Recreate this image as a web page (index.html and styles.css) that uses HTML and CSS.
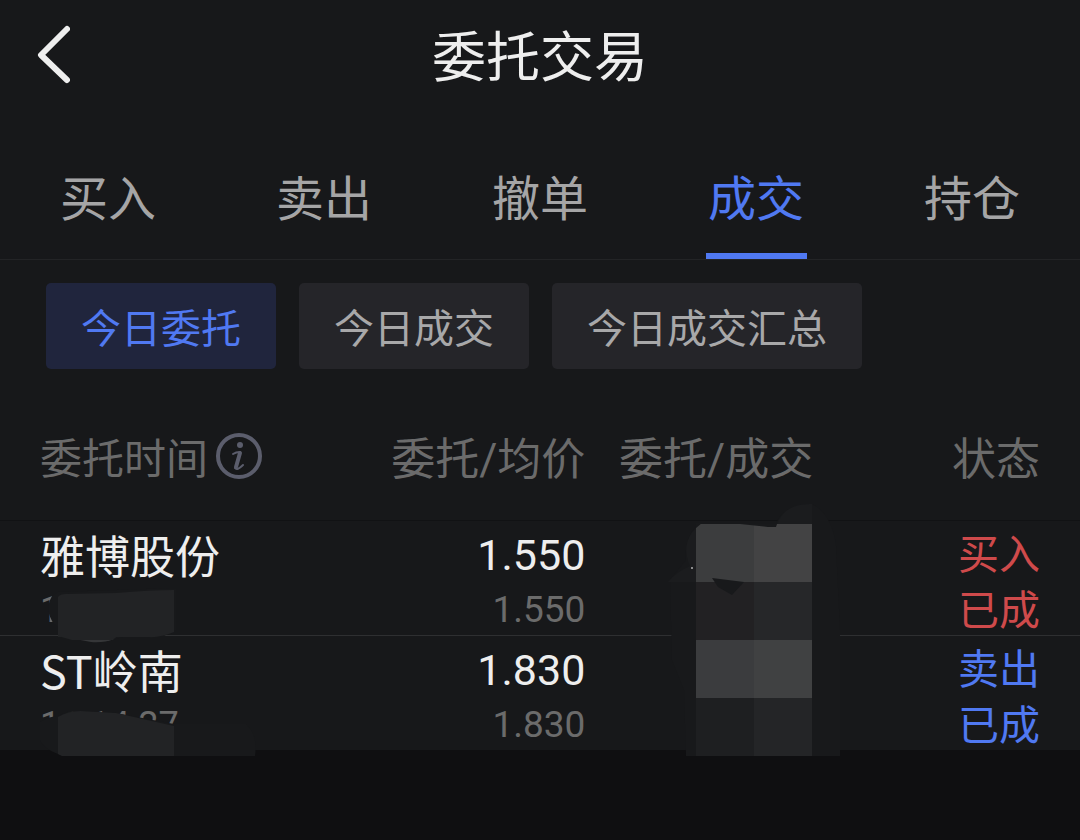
FILE: index.html
```html
<!DOCTYPE html>
<html lang="zh-CN">
<head>
    <meta charset="UTF-8">
    <meta name="viewport" content="width=device-width, initial-scale=1.0">
    <title>委托交易</title>
    <link rel="stylesheet" href="styles.css">
</head>
<body>
    <div class="page">
        <header class="header">
            <button class="back" type="button" aria-label="返回">
                <svg width="36" height="60" viewBox="0 0 36 60">
                    <path d="M33 4 L7 30 L33 55" />
                </svg>
            </button>
            <h1>委托交易</h1>
        </header>

        <nav class="tabs">
            <a href="#buy">买入</a>
            <a href="#sell">卖出</a>
            <a href="#cancel">撤单</a>
            <a href="#deal" class="active">成交</a>
            <a href="#position">持仓</a>
        </nav>

        <div class="filters">
            <button type="button" class="chip active">今日委托</button>
            <button type="button" class="chip">今日成交</button>
            <button type="button" class="chip">今日成交汇总</button>
        </div>

        <div class="orders">
            <table>
                <thead>
                    <tr>
                        <th class="col-time">
                            <div class="time-head">
                                <span>委托时间</span>
                                <button class="info" type="button" aria-label="说明">
                                    <svg width="48" height="48" viewBox="0 0 48 48">
                                        <circle class="ring" cx="24" cy="24" r="21" />
                                        <circle class="dot" cx="25" cy="13" r="3" />
                                        <path class="stem" d="M18 22 Q21 20 25 20" />
                                        <path class="stem bold" d="M25 21 L21 35" />
                                        <path class="stem" d="M20 36 Q22 39 28 33" />
                                    </svg>
                                </button>
                            </div>
                        </th>
                        <th class="col-price">委托/均价</th>
                        <th class="col-amount">委托/成交</th>
                        <th class="col-state">状态</th>
                    </tr>
                </thead>
                <tbody>
                    <tr>
                        <td>
                            <div class="main">雅博股份</div>
                            <div class="sub time">1</div>
                        </td>
                        <td class="num">
                            <div class="main">1.550</div>
                            <div class="sub">1.550</div>
                        </td>
                        <td></td>
                        <td class="state buy">
                            <div>买入</div>
                            <div>已成</div>
                        </td>
                    </tr>
                    <tr>
                        <td>
                            <div class="main">ST岭南</div>
                            <div class="sub time">11:14:27</div>
                        </td>
                        <td class="num">
                            <div class="main">1.830</div>
                            <div class="sub">1.830</div>
                        </td>
                        <td></td>
                        <td class="state sell">
                            <div>卖出</div>
                            <div>已成</div>
                        </td>
                    </tr>
                </tbody>
            </table>

            <!-- blocks that hide the order time and amount -->
            <svg class="mask" viewBox="0 0 1080 270" aria-hidden="true">
                <path fill="#18191b" d="M52 96 Q44 110 54 124 Q66 136 84 140 H112 L126 136 H164 L176 130 V88 L58 92 Z" />
                <path fill="#222325" d="M58 97 Q60 94 66 94 L116 93 Q150 90 174 90 V132 Q160 138 148 137 H58 Z" />
                <path fill="#353638" d="M75 139 H114 Q104 143 91 142 Z" />
                <path fill="#222325" d="M58 136 H118 L112 140 H72 Z" />

                <path fill="#18191b" d="M40 222 Q50 216 58 216 L70 211 L116 213 L174 224 H246 Q258 234 255 256 H64 Q44 250 40 240 Z" />
                <path fill="#222325" d="M58 217 Q68 211 80 211 L116 213 L174 226 V256 H62 L58 254 Z" />

                <path fill="#18191b" d="M686 60 Q684 34 700 24 L776 24 Q782 6 812 4 Q832 14 836 46 L840 130 V256 H686 L684 190 L672 160 L670 80 Z" />
                <path fill="#1b1c1e" d="M777 25 Q784 3 812 4 V25 Z" />
                <path fill="#1b1c1e" d="M696 28 Q680 44 690 66 Q676 72 668 82 H696 Z" />
                <rect fill="#3c3d3e" x="696" y="24" width="58" height="58" />
                <rect fill="#434344" x="754" y="24" width="58" height="58" />
                <rect fill="#222123" x="696" y="82" width="58" height="58" />
                <rect fill="#262729" x="754" y="82" width="58" height="58" />
                <rect fill="#3b3c3e" x="696" y="140" width="58" height="58" />
                <rect fill="#404142" x="754" y="140" width="58" height="58" />
                <rect fill="#1e1f21" x="696" y="198" width="58" height="58" />
                <rect fill="#242527" x="754" y="198" width="58" height="58" />
                <path fill="#18191b" d="M695 23 H702 L696 28 Z M740 24 H777 L776 27 H768 Z" />
                <path fill="#18191b" d="M712 78 L744 82 L732 95 L718 87 Z" />
                <rect fill="#8a8b8c" x="691" y="67" width="2" height="2" />
            </svg>
        </div>
    </div>
</body>
</html>
```

FILE: styles.css
```css
* {
    box-sizing: border-box;
}

body {
    min-height: 100vh;
    margin: 0;
    background-color: #0f0f11;
    color: #eeeeee;
    font-family: "Noto Sans CJK SC", sans-serif;
}

button {
    padding: 0;
    border: none;
    background: none;
    font-family: inherit;
    cursor: pointer;
}

svg {
    display: block;
}

.page {
    background-color: #17181a;
}

.header {
    display: grid;
    grid-template-columns: 1fr auto 1fr;
    align-items: center;
    height: 110px;
    padding: 0 34px;
}

.header h1 {
    margin: 0;
    padding-bottom: 2px;
    font-size: 54px;
    font-weight: 400;
    line-height: 80px;
}

.back {
    justify-self: start;
}

.back path {
    fill: none;
    stroke: #eeeeee;
    stroke-width: 6;
    stroke-linecap: round;
    stroke-linejoin: round;
}

.tabs {
    display: flex;
    height: 150px;
    border-bottom: 1px solid #232426;
}

.tabs a {
    flex: 1;
    display: flex;
    flex-direction: column;
    align-items: center;
    justify-content: space-between;
    padding-top: 49px;
    color: #a5a5a6;
    font-size: 48px;
    line-height: 72px;
    text-decoration: none;
}

.tabs a::after {
    content: "";
    width: 101px;
    height: 6px;
}

.tabs .active {
    color: #5079f2;
}

.tabs .active::after {
    background-color: #5079f2;
}

.filters {
    display: flex;
    gap: 23px;
    padding: 23px 46px;
}

.chip {
    height: 86px;
    padding: 0 35px;
    border-radius: 5px;
    background-color: #252529;
    color: #a8a8a9;
    font-size: 40px;
}

.chip.active {
    background-color: #20253d;
    color: #5079f2;
}

.orders {
    position: relative;
}

table {
    width: 100%;
    border-collapse: collapse;
    table-layout: fixed;
}

th {
    height: 128px;
    padding: 0;
    border-bottom: 1px solid #111214;
    color: #6b6b6b;
    font-family: Roboto, "Noto Sans CJK SC", sans-serif;
    font-size: 44px;
    font-weight: 400;
    text-align: right;
    white-space: nowrap;
}

.col-time {
    width: 35%;
    padding-left: 40px;
    font-size: 42px;
}

.col-price {
    width: 19.2%;
}

.col-amount {
    width: 21.1%;
}

.col-state {
    padding-right: 40px;
}

.time-head {
    display: flex;
    align-items: center;
    gap: 7px;
}

.info svg {
    fill: none;
    stroke: #5b5d6c;
}

.info .ring {
    stroke-width: 4;
}

.info .dot {
    fill: #5b5d6c;
    stroke: none;
}

.info .stem {
    stroke-width: 2;
    stroke-linecap: round;
}

.info .bold {
    stroke-width: 4;
}

td {
    height: 115px;
    padding: 4px 0 0;
    border-bottom: 1px solid #2e2f31;
    vertical-align: top;
}

tbody tr:last-child td {
    border-bottom: none;
}

td:first-child {
    padding-left: 40px;
}

.main {
    font-size: 45px;
    line-height: 60px;
}

.sub {
    color: #6b6b6b;
    font-size: 37px;
    line-height: 50px;
}

.time {
    font-family: Roboto, sans-serif;
    font-size: 36px;
}

.num {
    font-family: Roboto, sans-serif;
    text-align: right;
}

.num .main {
    font-size: 43px;
}

.state {
    padding: 2px 40px 0 0;
    font-size: 41px;
    line-height: 56px;
    text-align: right;
}

.buy {
    color: #cf4a4b;
}

.sell {
    color: #5079f2;
}

.mask {
    position: absolute;
    left: 0;
    bottom: -20px;
    width: 100%;
}
```
